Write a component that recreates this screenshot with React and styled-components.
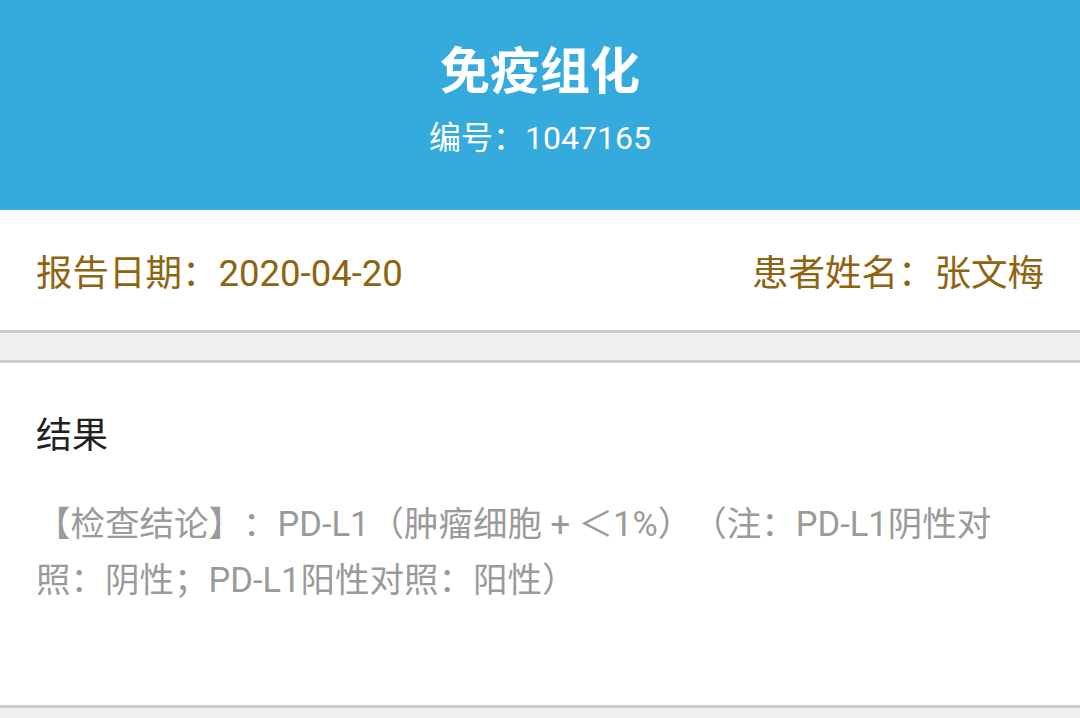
import React from "react"
import styled, { createGlobalStyle } from "styled-components"

const Global = createGlobalStyle`
  html, body {
    margin: 0;
    padding: 0;
    background: #f0f0f0;
    font-family: Roboto, "Noto Sans CJK SC", sans-serif;
    text-spacing-trim: space-all;
  }
`
const Header = styled.header`
  height: 210px;
  box-sizing: border-box;
  padding-top: 42px;
  background: #35aadd;
  color: #fff;
  text-align: center;
`
const Title = styled.h1`
  margin: 0;
  font-size: 50px;
  line-height: 60px;
  font-weight: bold;
`
const Serial = styled.div`
  margin-top: 16px;
  font-size: 32px;
  line-height: 40px;
`
const InfoRow = styled.section`
  height: 120px;
  display: flex;
  align-items: center;
  justify-content: space-between;
  padding: 0 36px;
  background: #fff;
  border-bottom: 3px solid #cccccc;
  color: #8e6410;
  font-size: 36.5px;
`
const Gap = styled.div`
  height: 27px;
`
const Card = styled.section`
  background: #fff;
  border-top: 3px solid #cccccc;
  border-bottom: 3px solid #cccccc;
  padding: 48px 36px 97px;
`
const CardTitle = styled.h2`
  margin: 0;
  font-size: 36px;
  line-height: 51px;
  font-weight: normal;
  color: #222;
`
const Conclusion = styled.p`
  margin: 34px 0 0;
  font-size: 34.5px;
  line-height: 56px;
  color: #9a9a9a;
`

export default () => (
  <>
    <Global />
    <Header>
      <Title>免疫组化</Title>
      <Serial>编号：1047165</Serial>
    </Header>
    <InfoRow>
      <span>报告日期：2020-04-20</span>
      <span>患者姓名：张文梅</span>
    </InfoRow>
    <Gap />
    <Card>
      <CardTitle>结果</CardTitle>
      <Conclusion>
        【检查结论】：PD-L1（肿瘤细胞 + ＜1%）（注：PD-L1阴性对照：阴性；PD-L1阳性对照：阳性）
      </Conclusion>
    </Card>
  </>
)
